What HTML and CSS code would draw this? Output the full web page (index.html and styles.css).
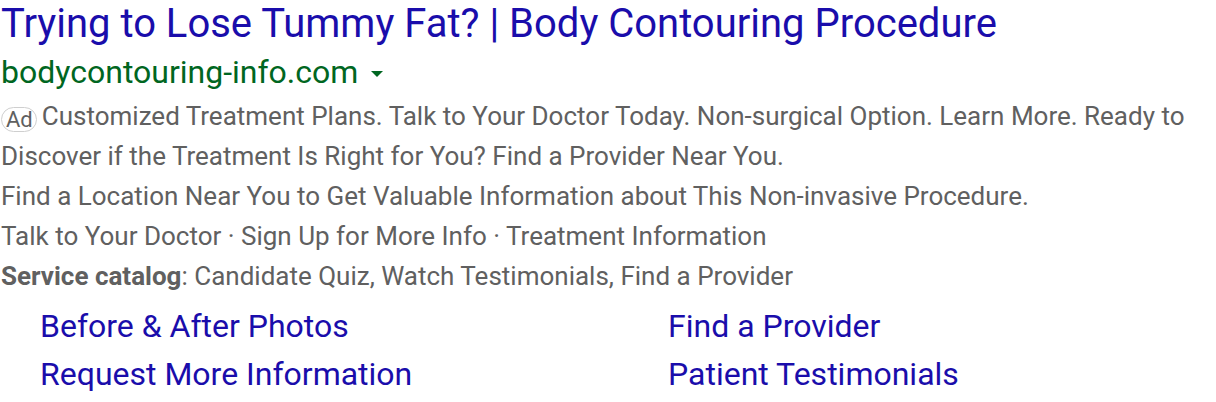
FILE: index.html
```html
<!DOCTYPE html>
<html>
<head>
<meta charset="utf-8">
<link rel="stylesheet" href="styles.css">
</head>
<body>
<div class="ad">
  <div class="title">Trying to Lose Tummy Fat? | Body Contouring Procedure</div>
  <div class="url">bodycontouring-info.com<span class="caret"></span></div>
  <div class="desc"><span class="badge">Ad</span>Customized Treatment Plans. Talk to Your Doctor Today. Non-surgical Option. Learn More. Ready to Discover if the Treatment Is Right for You? Find a Provider Near You.</div>
  <div class="desc">Find a Location Near You to Get Valuable Information about This Non-invasive Procedure.</div>
  <div class="desc">Talk to Your Doctor · Sign Up for More Info · Treatment Information</div>
  <div class="desc"><b>Service catalog</b>: Candidate Quiz, Watch Testimonials, Find a Provider</div>
  <div class="sitelinks">
    <div class="link">Before &amp; After Photos</div>
    <div class="link">Find a Provider</div>
    <div class="link">Request More Information</div>
    <div class="link">Patient Testimonials</div>
  </div>
</div>
</body>
</html>
```
FILE: styles.css
```css
html, body { margin: 0; padding: 0; background: #fff; }
body { font-family: Roboto, Arial, sans-serif; }
.ad { padding: 0 0 0 1px; width: 1200px; }
.title { color: #1a0dab; font-size: 40px; line-height: 48px; white-space: nowrap; }
.url { color: #006621; font-size: 32px; line-height: 48px; display: flex; align-items: center; }
.caret { width: 0; height: 0; border-left: 6px solid transparent; border-right: 6px solid transparent; border-top: 6px solid #006621; margin-left: 13px; margin-top: 4px; }
.desc { color: #606060; font-size: 26px; line-height: 40px; }
.desc b { font-weight: bold; }
.badge { display: inline-block; box-sizing: border-box; height: 25px; border: 1px solid #cfcfcf; border-radius: 13px; font-size: 22px; line-height: 23px; padding: 0 3px 0 4px; color: #606060; vertical-align: -2px; margin-right: 5px; }
.sitelinks { display: grid; grid-template-columns: 628px 1fr; padding-left: 39px; margin-top: 6px; }
.link { color: #1a0dab; font-size: 32px; line-height: 48px; }
```
